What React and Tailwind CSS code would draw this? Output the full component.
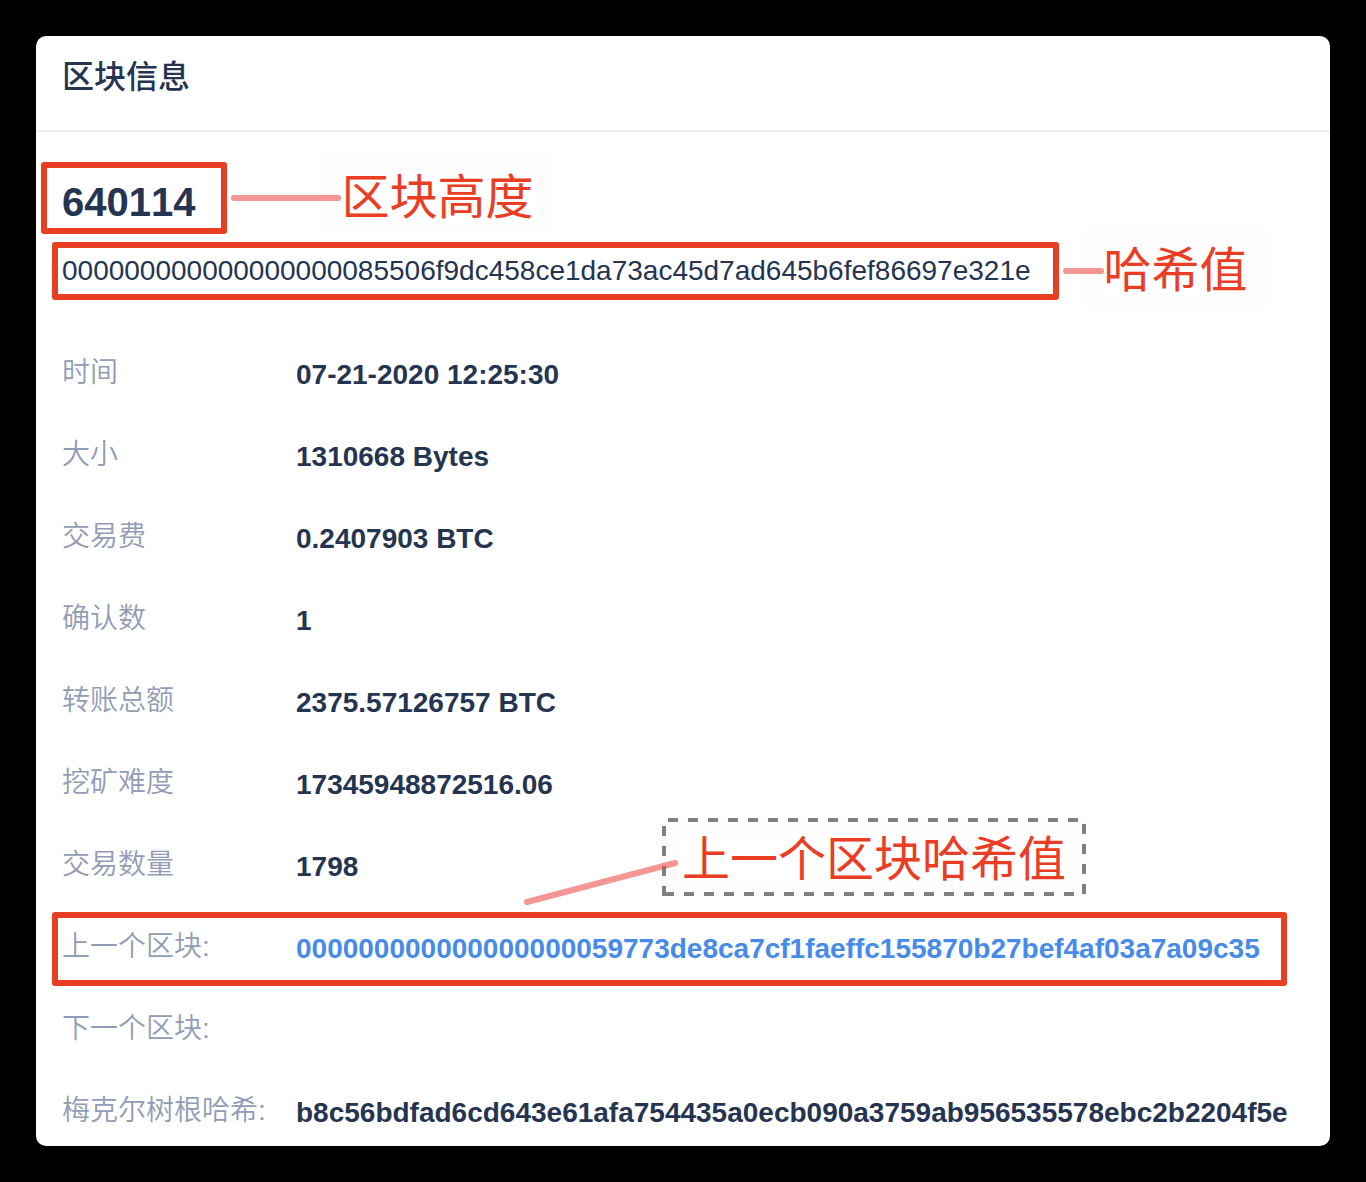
const LEADING_ZEROS = "0".repeat(19);
const BLOCK_HASH = LEADING_ZEROS + "85506f9dc458ce1da73ac45d7ad645b6fef86697e321e";
const PREVIOUS_HASH = LEADING_ZEROS + "59773de8ca7cf1faeffc155870b27bef4af03a7a09c35";

const rows = [
  { label: "时间", value: "07-21-2020 12:25:30" },
  { label: "大小", value: "1310668 Bytes" },
  { label: "交易费", value: "0.2407903 BTC" },
  { label: "确认数", value: "1" },
  { label: "转账总额", value: "2375.57126757 BTC" },
  { label: "挖矿难度", value: "17345948872516.06" },
  { label: "交易数量", value: "1798" },
  { label: "上一个区块:", value: PREVIOUS_HASH, link: true },
  { label: "下一个区块:", value: "" },
  {
    label: "梅克尔树根哈希:",
    value: "b8c56bdfad6cd643e61afa754435a0ecb090a3759ab956535578ebc2b2204f5e",
  },
];

function Callout({ children }) {
  return (
    <span className="-mt-[18px] -mb-[10px] -ml-5 shrink-0 rounded-lg bg-[#fffdfc] px-4 pt-[19px] pb-[11px] text-[48px] leading-[50px] whitespace-nowrap text-[#eb3d24]">
      <span className="block bg-white px-1">{children}</span>
    </span>
  );
}

function PreviousBlockCallout() {
  return (
    <>
      <div className="absolute -top-[14px] -bottom-[18px] -left-[10px] w-[1235px] rounded-[3px] border-6 border-[#e83f22]" />
      <div className="absolute bottom-[72px] left-[600px]">
        <svg className="absolute inset-0 h-full w-full" aria-hidden="true">
          <rect x="0" y="0" width="100%" height="100%" fill="#fffdfc" />
          <path
            d="M6 2H424M422 6V78M2 8V78M2 76H420"
            fill="none"
            stroke="#808080"
            strokeWidth="4"
            strokeDasharray="10 10"
          />
        </svg>
        <span className="relative block px-4 pt-[17px] pb-[11px] text-[48px] leading-[50px] whitespace-nowrap text-[#eb3d24]">
          <span className="block bg-white px-1">上一个区块哈希值</span>
        </span>
        <svg
          className="absolute top-[40px] -left-[140px]"
          width="160"
          height="50"
          viewBox="0 0 160 50"
          aria-hidden="true"
        >
          <path d="M5 44L153 5" stroke="#eb403a" strokeOpacity="0.55" strokeWidth="6" strokeLinecap="round" />
        </svg>
      </div>
    </>
  );
}

export default function App() {
  return (
    <main className="min-h-screen bg-black p-9 font-['Liberation_Sans','Noto_Sans_CJK_SC',sans-serif] text-[#253450] [font-kerning:none]">
      <section className="rounded-[10px] bg-white pb-[14px]">
        <header className="border-b-2 border-[#eeeeef] px-[26px] pt-[17px] pb-[29px]">
          <h1 className="text-[32px] leading-[48px] font-medium">区块信息</h1>
        </header>

        <div className="flex flex-col gap-2 pt-[30px]">
          <div className="flex items-center pl-[5px]">
            <h2 className="flex h-[72px] items-center rounded-[3px] border-6 border-[#e83f22] pt-2 pr-[26px] pl-[15px] text-[40px] leading-none font-bold">
              640114
            </h2>
            <span className="relative z-10 ml-1 h-[6px] w-[110px] rounded-full bg-[#eb403a]/55" />
            <Callout>区块高度</Callout>
          </div>
          <div className="flex items-center pl-4">
            <p className="flex h-[58px] items-center rounded-[3px] border-6 border-[#e83f22] pr-[22px] pl-1 text-[28px] leading-none">
              {BLOCK_HASH}
            </p>
            <span className="relative z-10 ml-1 h-[6px] w-[41px] shrink-0 rounded-full bg-[#eb403a]/55" />
            <Callout>哈希值</Callout>
          </div>
        </div>

        <dl className="mt-[52px] flex flex-col gap-10 pl-[26px] text-[28px] leading-[42px]">
          {rows.map((row) => (
            <div key={row.label} className="relative flex">
              {row.link && <PreviousBlockCallout />}
              <dt className="relative w-[234px] shrink-0 font-[350] whitespace-nowrap text-[#929cb6]">{row.label}</dt>
              <dd className="relative pt-1 leading-[38px] font-bold whitespace-nowrap">
                {row.link ? (
                  <a href="#previous" className="text-[#478bea]">
                    {row.value}
                  </a>
                ) : (
                  row.value
                )}
              </dd>
            </div>
          ))}
        </dl>
      </section>
    </main>
  );
}
